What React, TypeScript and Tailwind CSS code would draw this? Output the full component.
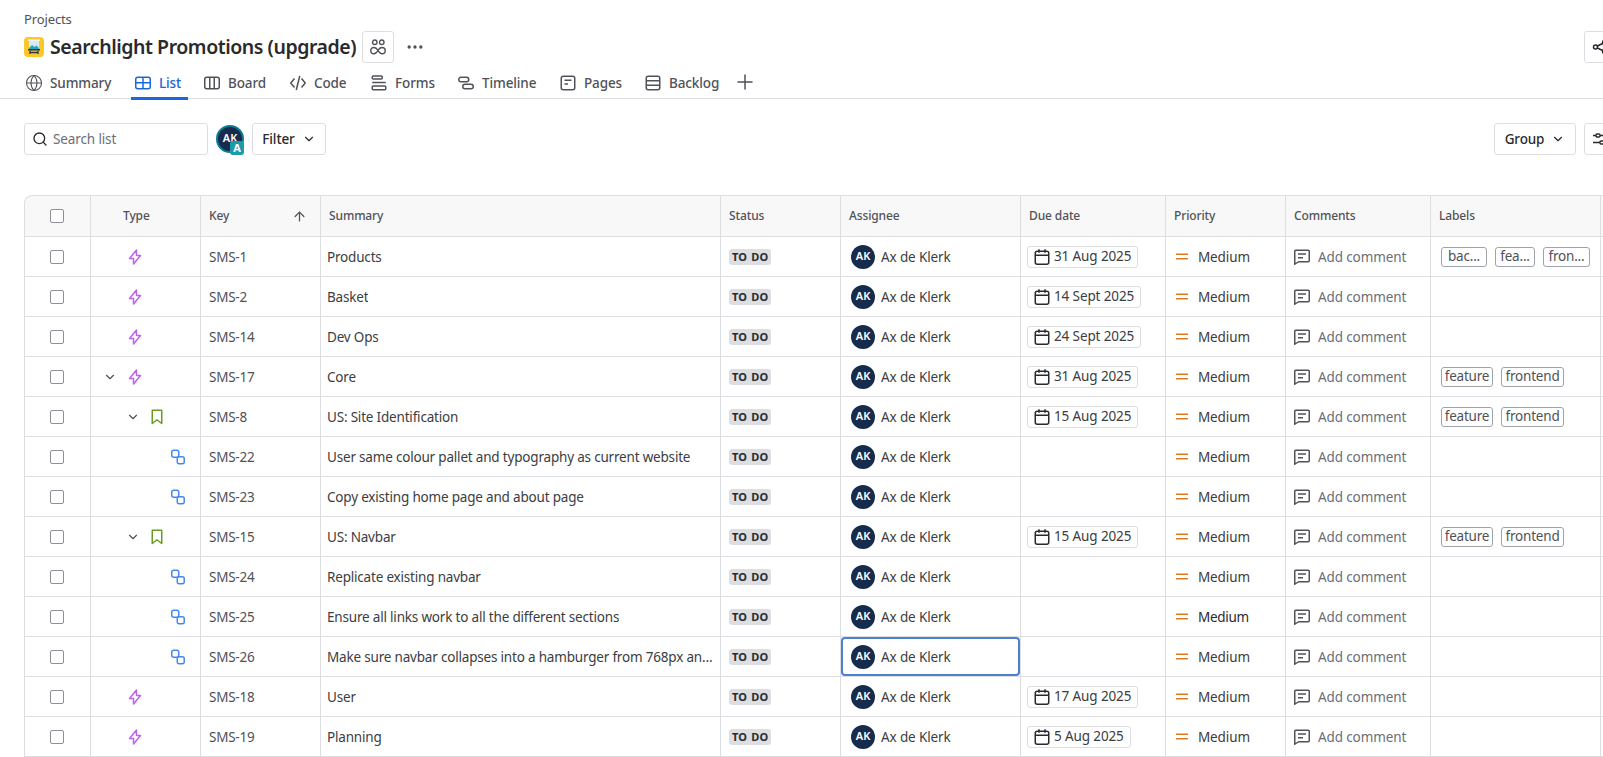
import React from "react";
import { Search, ChevronDown, ArrowUp, Plus, MoreHorizontal, Globe } from "lucide-react";

type Row = { key: string; summary: string; kind: "epic" | "story" | "sub"; expand?: boolean; date?: string; labels?: string[]; dark?: boolean; focus?: boolean };

const rows: Row[] = [
  { key: "SMS-1", summary: "Products", kind: "epic", date: "31 Aug 2025", labels: ["bac...", "fea...", "fron..."] },
  { key: "SMS-2", summary: "Basket", kind: "epic", date: "14 Sept 2025" },
  { key: "SMS-14", summary: "Dev Ops", kind: "epic", date: "24 Sept 2025" },
  { key: "SMS-17", summary: "Core", kind: "epic", expand: true, date: "31 Aug 2025", labels: ["feature", "frontend"] },
  { key: "SMS-8", summary: "US: Site Identification", kind: "story", expand: true, date: "15 Aug 2025", labels: ["feature", "frontend"] },
  { key: "SMS-22", summary: "User same colour pallet and typography as current website", kind: "sub" },
  { key: "SMS-23", summary: "Copy existing home page and about page", kind: "sub" },
  { key: "SMS-15", summary: "US: Navbar", kind: "story", expand: true, date: "15 Aug 2025", labels: ["feature", "frontend"] },
  { key: "SMS-24", summary: "Replicate existing navbar", kind: "sub" },
  { key: "SMS-25", summary: "Ensure all links work to all the different sections", kind: "sub", dark: true },
  { key: "SMS-26", summary: "Make sure navbar collapses into a hamburger from 768px and below on all devices", kind: "sub", focus: true },
  { key: "SMS-18", summary: "User", kind: "epic", date: "17 Aug 2025" },
  { key: "SMS-19", summary: "Planning", kind: "epic", date: "5 Aug 2025" },
];

const cols = "grid grid-cols-[66px_110px_120px_400px_120px_180px_145px_120px_145px_170px_100px]";
const cell = "flex items-center border-r border-[#dddee1] min-w-0";

const labelWidth: Record<string, string> = {
  "bac...": "w-[46px]",
  "fea...": "w-[40px]",
  "fron...": "w-[47px]",
  feature: "w-[52px]",
  frontend: "w-[63px]",
};

function Ico({ children, size = 16 }: { children: React.ReactNode; size?: number }) {
  return (
    <svg width={size} height={size} viewBox="0 0 16 16" fill="none" stroke="currentColor" strokeWidth="1.5" className="shrink-0">
      {children}
    </svg>
  );
}

const TabIcons: Record<string, React.ReactNode> = {
  List: <Ico><rect x=".75" y="2.25" width="14.5" height="11.5" rx="2" /><path d="M1 7.75h14M8 2.5v11" /></Ico>,
  Board: <Ico><rect x=".75" y="2.25" width="14.5" height="11.5" rx="2" /><path d="M5.75 2.5v11M10.25 2.5v11" /></Ico>,
  Code: <Ico><path d="M4.5 3.5 .75 8l3.75 4.5M11.5 3.5 15.25 8l-3.75 4.5M9.75 1 6.25 15" /></Ico>,
  Forms: <Ico><rect x="1.25" y="1" width="10" height="3" rx="1" /><path d="M1.25 7.5h13.5" /><rect x="1.25" y="11" width="13.5" height="3.75" rx="1" /></Ico>,
  Timeline: <Ico><rect x=".75" y="2.25" width="10" height="4.5" rx="2.25" /><rect x="4.75" y="9.25" width="10.5" height="4.5" rx="2.25" /></Ico>,
  Pages: <Ico><rect x="1.25" y="1.25" width="13.5" height="13.5" rx="2" /><path d="M4.5 5.25h7M4.5 9h3.5" /></Ico>,
  Backlog: <Ico><rect x="1.25" y="1.25" width="13.5" height="13.5" rx="2" /><path d="M1.5 5.75h13M1.5 10.25h13" /></Ico>,
};

const tabs = [
  { name: "Summary", w: "w-[109px]" },
  { name: "List", w: "w-[69px]" },
  { name: "Board", w: "w-[86px]" },
  { name: "Code", w: "w-[81px]" },
  { name: "Forms", w: "w-[87px]" },
  { name: "Timeline", w: "w-[102px]" },
  { name: "Pages", w: "w-[85px]" },
  { name: "Backlog", w: "w-[90px]" },
];

function TypeIcon({ kind }: { kind: Row["kind"] }) {
  if (kind === "epic")
    return (
      <svg width="16" height="16" viewBox="0 0 16 16" fill="none" stroke="#bf63f3" strokeWidth="1.5" strokeLinejoin="round" className="shrink-0">
        <path d="M9.5 1 2.5 9.5h4V15l7-8.5h-4z" />
      </svg>
    );
  if (kind === "story")
    return (
      <svg width="16" height="16" viewBox="0 0 16 16" fill="none" stroke="#6a9a23" strokeWidth="1.5" strokeLinejoin="round" className="shrink-0">
        <path d="M3.25 1.25h9.5v13.25L8 10.75 3.25 14.5z" />
      </svg>
    );
  return (
    <svg width="16" height="16" viewBox="0 0 16 16" fill="none" stroke="#4688ec" strokeWidth="1.5" className="shrink-0">
      <rect x="1.75" y="1.25" width="7" height="7" rx="2" />
      <rect x="7.25" y="7.75" width="7" height="7" rx="2" />
    </svg>
  );
}

function Check() {
  return <span className="w-[14px] h-[14px] rounded-[2px] border border-[#8c8f97] bg-white block" />;
}

function Avatar() {
  return (
    <span className="w-6 h-6 rounded-full bg-[#172b4d] text-white text-[11px] font-semibold tracking-normal flex items-center justify-center shrink-0">AK</span>
  );
}

function TypeCell({ r }: { r: Row }) {
  if (r.kind === "sub")
    return <div className={`${cell} pl-[79px]`}><TypeIcon kind={r.kind} /></div>;
  if (r.kind === "story")
    return (
      <div className={`${cell} pl-[34px]`}>
        <span className="w-4 h-4 flex items-center justify-center mr-[8px]">
          <ChevronDown size={14} className="text-[#505258]" />
        </span>
        <TypeIcon kind={r.kind} />
      </div>
    );
  return (
    <div className={`${cell} pl-[11px]`}>
      <span className="w-4 h-4 flex items-center justify-center mr-[9px]">
        {r.expand ? <ChevronDown size={14} className="text-[#505258]" /> : null}
      </span>
      <TypeIcon kind={r.kind} />
    </div>
  );
}

function Header() {
  const h = `${cell} text-[12px] font-medium text-[#505258] tracking-[-0.12px]`;
  return (
    <div className={`${cols} h-[42px] bg-[#f8f8f8] border-b border-[#dddee1] border-t rounded-tl-lg`}>
      <div className={`${cell} justify-center pr-[1px]`}><Check /></div>
      <div className={`${h} pl-[32px]`}>Type</div>
      <div className={`${h} pl-[8px] pr-[13px] justify-between`}>
        <span>Key</span>
        <ArrowUp size={15} className="text-[#505258]" />
      </div>
      <div className={`${h} pl-[8px]`}>Summary</div>
      <div className={`${h} pl-[8px]`}>Status</div>
      <div className={`${h} pl-[8px]`}>Assignee</div>
      <div className={`${h} pl-[8px]`}>Due date</div>
      <div className={`${h} pl-[8px]`}>Priority</div>
      <div className={`${h} pl-[8px]`}>Comments</div>
      <div className={`${h} pl-[8px]`}>Labels</div>
      <div className={`${h} pl-[8px]`} />
    </div>
  );
}

function TableRow({ r }: { r: Row }) {
  return (
    <div className={`${cols} h-[40px] border-b border-[#dddee1] text-[#3b3d42]`}>
      <div className={`${cell} justify-center pr-[1px]`}><Check /></div>
      <TypeCell r={r} />
      <div className={`${cell} pl-[8px] text-[#505258]`}><span className="pt-px tracking-[-0.25px]">{r.key}</span></div>
      <div className={`${cell} pl-[6px] pr-[5px]`}>
        <span className="truncate pt-px tracking-[-0.19px]">{r.summary}</span>
      </div>
      <div className={`${cell} pl-[8px]`}>
        <span className="h-4 px-[3px] rounded-[3px] bg-[#dddee1] text-[#292a2e] text-[11px] font-bold tracking-[0.2px] [word-spacing:1px] flex items-center leading-none">TO DO</span>
      </div>
      <div className={`${cell} relative pl-[10px] gap-[6px]`}>
        <Avatar />
        <span className="pt-px">Ax de Klerk</span>
        {r.focus && <span className="absolute left-0 right-0 top-0 bottom-0 rounded-[4px] border-2 border-[#4f7fd0]" />}
      </div>
      <div className={`${cell} pl-[6px]`}>
        {r.date && (
          <span className="h-[22px] px-[6px] border border-[#dddee1] rounded-[3px] flex items-center gap-[4px]">
            <svg width="16" height="16" viewBox="0 0 16 16" fill="none" stroke="#292a2e" strokeWidth="1.5" className="shrink-0">
              <rect x="1.25" y="2.25" width="13.5" height="13" rx="2" />
              <path d="M1.5 6.25h13M5 .25v3.5M11 .25v3.5" />
            </svg>
            {r.date}
          </span>
        )}
      </div>
      <div className={`${cell} pl-[10px] gap-[10px] ${r.dark ? "text-[#292a2e] tracking-[-0.3px]" : ""}`}>
        <svg width="12" height="8" viewBox="0 0 12 8" className="shrink-0">
          <rect y="0.5" width="12" height="1.6" fill="#d9781f" rx="0.5" />
          <rect y="5" width="12" height="1.6" fill="#d9781f" rx="0.5" />
        </svg>
        <span className="pt-px">Medium</span>
      </div>
      <div className={`${cell} pl-[8px] gap-2 text-[#6b6e76]`}>
        <svg width="16" height="16" viewBox="0 0 16 16" fill="none" stroke="#505258" strokeWidth="1.5" strokeLinejoin="round" className="shrink-0">
          <path d="M.75 2.25a1 1 0 0 1 1-1h12.5a1 1 0 0 1 1 1v9.5a1 1 0 0 1-1 1H4.5L.75 15.25z" />
          <path d="M4 5h8M4 8.75h5" />
        </svg>
        <span className="pt-px">Add comment</span>
      </div>
      <div className={`${cell} pl-[10px] gap-2`}>
        {r.labels?.map((l) => (
          <span key={l} className={`h-5 ${labelWidth[l]} rounded-[3px] border border-[#a0a3a9] flex items-center justify-center text-[#505258] tracking-[-0.2px]`}>{l}</span>
        ))}
      </div>
      <div className={cell} />
    </div>
  );
}

export default function App() {
  return (
    <div className="w-screen h-screen overflow-hidden bg-white text-[#292a2e] font-['Noto_Sans',sans-serif] text-[13.5px] tracking-[-0.12px]">
      <div className="w-[1680px]">
        <div className="h-[99px] border-b border-[#dddee1] pl-6">
          <div className="pt-[10px] text-[13px] leading-[18px] text-[#505258]">Projects</div>
          <div className="flex items-center mt-[3px] h-[32px] pr-[64px] justify-between">
            <div className="flex items-center">
              <svg width="20" height="20" viewBox="0 0 20 20" className="shrink-0">
                <rect width="20" height="20" rx="4" fill="#fbc828" />
                <rect x="5" y="3.5" width="10" height="9" fill="#d5ecf5" />
                <path d="M5 11l3-3 2.5 2 2-1.5L15 11v1.5H5z" fill="#2aa5c5" />
                <rect x="4" y="2.5" width="12" height="1.5" fill="#f5f5f5" />
                <rect x="4" y="12" width="12" height="1.5" fill="#33364a" />
                <path d="M6 13.5v3.5M14 13.5v3.5M6 15.5h8" stroke="#33364a" strokeWidth="1.3" />
              </svg>
              <h1 className="ml-[6px] text-[19.5px] leading-6 font-semibold tracking-[-0.45px] text-[#292a2e] whitespace-nowrap">Searchlight Promotions (upgrade)</h1>
              <span className="ml-[6px] w-8 h-8 border border-[#dddee1] rounded-[3px] flex items-center justify-center text-[#505258]">
                <svg width="16" height="16" viewBox="0 0 16 16" fill="none" stroke="currentColor" strokeWidth="1.4">
                  <circle cx="4.75" cy="3.25" r="2.25" />
                  <circle cx="11.75" cy="3.25" r="2.25" />
                  <path d="M8 11.5C7 9.75 6 8.5 4 8.5c-1.9 0-3.25 1.2-3.25 3S2.1 14.75 4 14.75c2 0 3-1.5 4-3.25s2-3 4-3c1.9 0 3.25 1.2 3.25 3s-1.35 3.25-3.25 3.25c-2 0-3-1.5-4-3.25z" />
                </svg>
              </span>
              <MoreHorizontal size={20} className="ml-[11px] text-[#505258]" />
            </div>
            <span className="w-8 h-8 border border-[#dddee1] rounded-[3px] flex items-center justify-center text-[#292a2e]">
              <svg width="16" height="16" viewBox="0 0 16 16" fill="none" stroke="currentColor" strokeWidth="1.5">
                <circle cx="3.5" cy="8" r="2" /><circle cx="12.5" cy="3.5" r="2" /><circle cx="12.5" cy="12.5" r="2" />
                <path d="M5.3 7 10.7 4.5M5.3 9l5.4 2.5" />
              </svg>
            </span>
          </div>
          <div className="flex items-center h-[34px] mt-[2px] pl-[2px] font-medium text-[#505258]">
            {tabs.map((t) => {
              const active = t.name === "List";
              return (
                <div key={t.name} className={`relative h-full flex items-center gap-2 pt-[2px] ${t.w} ${active ? "text-[#1868db]" : ""}`}>
                  {t.name === "Summary" ? <span className="-m-px"><Globe size={18} strokeWidth={1.4} /></span> : TabIcons[t.name]}
                  <span>{t.name}</span>
                  {active && <span className="absolute -left-1 right-[16px] bottom-[-1px] h-[3px] bg-[#1868db]" />}
                </div>
              );
            })}
            <Plus size={24} className="text-[#505258] -ml-[2px]" strokeWidth={1.5} />
          </div>
        </div>

        <div className="flex items-center justify-between pl-6 pr-[64px] mt-[24px] h-8">
          <div className="flex items-center">
            <div className="w-[184px] h-8 border border-[#dddee1] rounded-[3px] flex items-center pl-[7px] gap-[5px] text-[#6b6e76]">
              <Search size={16} className="text-[#292a2e]" />
              <span>Search list</span>
            </div>
            <div className="relative ml-2 w-[28px] h-[28px] rounded-full bg-[#172b4d] border-2 border-[#0b7a93] text-white text-[11px] font-semibold tracking-normal flex items-center justify-center">
              <span className="-mt-[2px]">AK</span>
              <span className="absolute -right-[2px] -bottom-[4px] w-[14px] h-[14px] rounded-[3px] bg-[#1d9aaa] text-white text-[11px] font-bold flex items-center justify-center">A</span>
            </div>
            <div className="ml-2 w-[74px] h-8 border border-[#dddee1] rounded-[3px] flex items-center justify-center gap-[7px] font-medium text-[#292a2e]">
              Filter <ChevronDown size={14} />
            </div>
          </div>
          <div className="flex items-center gap-2">
            <div className="w-[82px] h-8 border border-[#dddee1] rounded-[3px] flex items-center justify-center gap-[7px] font-medium text-[#292a2e]">
              Group <ChevronDown size={14} />
            </div>
            <span className="w-8 h-8 border border-[#dddee1] rounded-[3px] flex items-center justify-center">
              <svg width="16" height="16" viewBox="0 0 16 16" fill="none" stroke="#292a2e" strokeWidth="1.4">
                <path d="M1 4.5h3M8 4.5h7M1 11.5h7M12 11.5h3" />
                <rect x="4" y="3" width="4" height="3" rx="1" /><rect x="8" y="10" width="4" height="3" rx="1" />
              </svg>
            </span>
          </div>
        </div>

        <div className="ml-6 mt-[40px] border-l border-[#dddee1] rounded-tl-lg">
          <Header />
          {rows.map((r) => <TableRow key={r.key} r={r} />)}
        </div>
      </div>
    </div>
  );
}
